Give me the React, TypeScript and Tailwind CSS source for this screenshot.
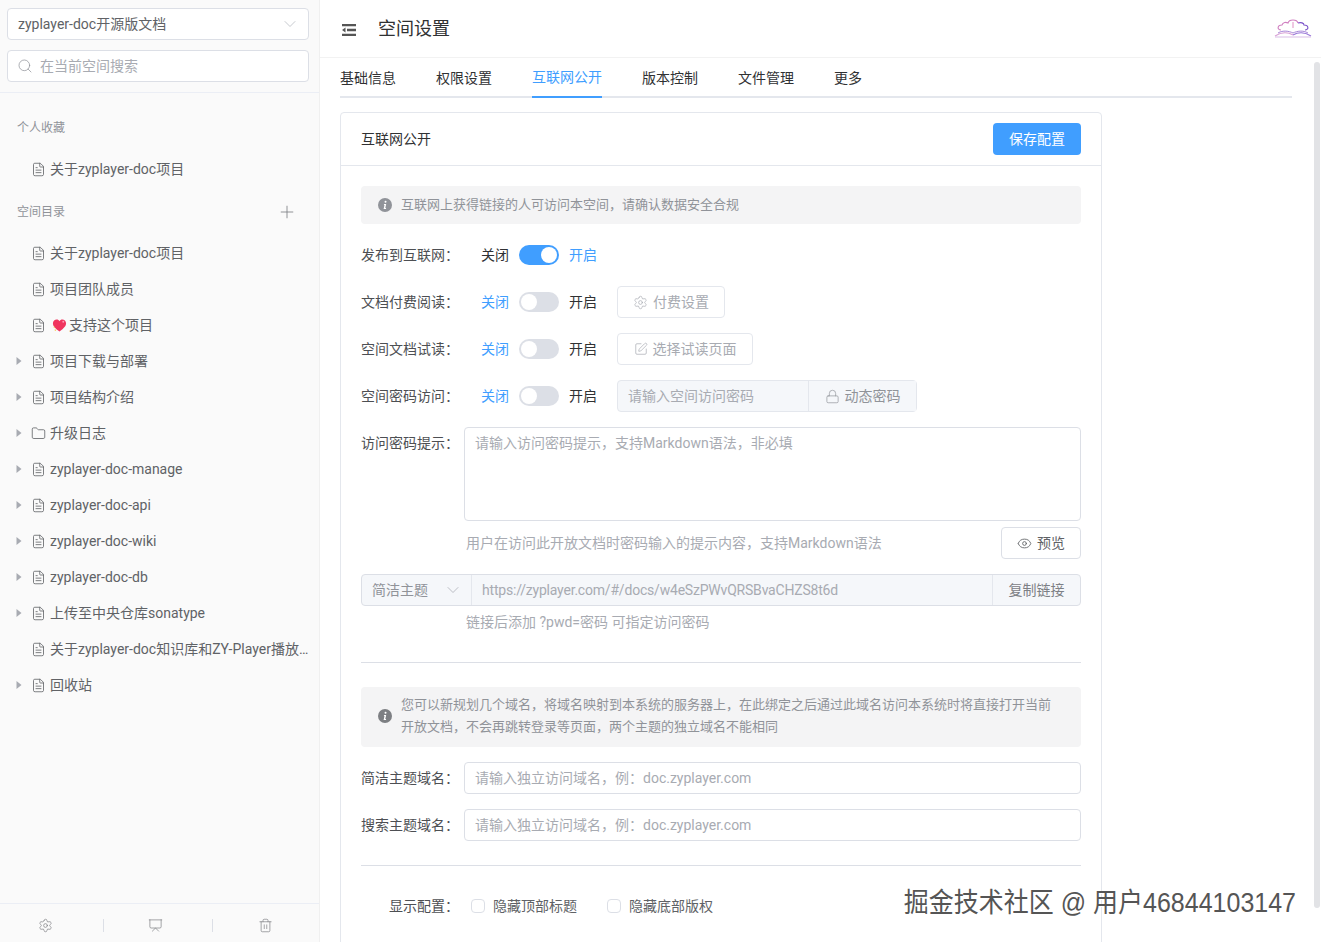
import React from "react";
import { ChevronDown, Search, Plus, FileText, Folder, Settings, Presentation, Trash2, Eye, Lock, SquarePen } from "lucide-react";

function Caret() {
  return (
    <svg width="6" height="8" viewBox="0 0 6 8" className="shrink-0">
      <path d="M0.5 0 L5.5 4 L0.5 8 Z" fill="#a8abb2" />
    </svg>
  );
}

function Heart() {
  return (
    <svg width="15" height="15" viewBox="0 0 16 15" className="shrink-0 ml-[2px] mr-[2px]">
      <path d="M8 14 C3 10 1 8 1 5 C1 2.5 3 1 5 1 C6.3 1 7.4 1.7 8 3 C8.6 1.7 9.7 1 11 1 C13 1 15 2.5 15 5 C15 8 13 10 8 14 Z" fill="#f0355f" />
      <path d="M3 12 l1 1 M2 9 l.8.8" stroke="#f7c948" strokeWidth="1.2" />
      <circle cx="12" cy="3.5" r="1" fill="#ff9ab5" />
    </svg>
  );
}

function TreeRow({ text, caret, icon, heart }: { text: string; caret?: boolean; icon?: "folder"; heart?: boolean }) {
  return (
    <div className="h-9 flex items-center text-sm text-[#606266] whitespace-nowrap">
      <div className="w-[31px] pl-4 shrink-0">{caret && <Caret />}</div>
      {icon === "folder" ? (
        <Folder size={15} strokeWidth={1.3} className="shrink-0 text-[#606266]" />
      ) : (
        <FileText size={15} strokeWidth={1.3} className="shrink-0 text-[#606266]" />
      )}
      <div className="ml-1 flex items-center w-[262px] min-w-0">
        {heart && <Heart />}
        <span className="truncate">{text}</span>
      </div>
    </div>
  );
}

function InfoIcon({ color }: { color: string }) {
  return (
    <svg width="14" height="14" viewBox="0 0 14 14" className="shrink-0">
      <circle cx="7" cy="7" r="7" fill={color} />
      <path d="M7.6 2.8 a1 1 0 1 1 -0.1 2 a1 1 0 0 1 0.1 -2 Z M6.1 6 H8.2 L7.3 10 H8.2 L7.9 11 H5.6 L6.5 7 H5.8 Z" fill="#fff" />
    </svg>
  );
}

function Label({ text }: { text: string }) {
  return <div className="w-[98px] mr-[5px] text-right text-sm text-[#4d4f53] shrink-0 whitespace-nowrap">{text}</div>;
}

function Switch({ on }: { on: boolean }) {
  return (
    <div className={`mx-[10px] w-10 h-5 rounded-full flex items-center px-[2px] ${on ? "bg-[#409eff] justify-end" : "bg-[#dcdfe6] justify-start"}`}>
      <div className="w-4 h-4 rounded-full bg-white" />
    </div>
  );
}

function ToggleRow({ label, on, children }: { label: string; on?: boolean; children?: React.ReactNode }) {
  return (
    <div className="flex items-center h-8 mt-[15px] text-sm">
      <Label text={label} />
      <span className={`ml-[17px] ${on ? "text-[#303133]" : "text-[#409eff]"}`}>关闭</span>
      <Switch on={!!on} />
      <span className={on ? "text-[#409eff]" : "text-[#303133]"}>开启</span>
      {children && <div className="ml-5 flex">{children}</div>}
    </div>
  );
}

function DisabledButton({ icon, text, width }: { icon: React.ReactNode; text: string; width: string }) {
  return (
    <div className={`h-8 ${width} border border-[#e4e7ed] rounded bg-white flex items-center justify-center gap-[5px] text-sm text-[#a8abb2]`}>
      {icon}
      <span>{text}</span>
    </div>
  );
}

function DomainRow({ label, className }: { label: string; className: string }) {
  return (
    <div className={`flex items-center h-8 ${className}`}>
      <Label text={label} />
      <div className="flex-1 h-8 border border-[#dcdfe6] rounded bg-white px-[10px] flex items-center text-sm text-[#a8abb2]">
        请输入独立访问域名，例：doc.zyplayer.com
      </div>
    </div>
  );
}

function Logo() {
  return (
    <svg width="38" height="22" viewBox="0 0 38 22" fill="none">
      <path d="M7 13 C3 13 3 8 8 8 C9 5 12 5 14 6 C15 2 23 2 24 6" stroke="#d07fc0" strokeWidth="1.1" />
      <path d="M24 6 C27 5 30 6 30 8 C35 8 35 13 31 13" stroke="#7a52c9" strokeWidth="1.1" />
      <path d="M19 5 V11" stroke="#e08fc4" strokeWidth="1" />
      <path d="M1 19 C7 15 14 15 19 18" stroke="#d9a3d6" strokeWidth="1.1" />
      <path d="M19 18 C24 15 31 15 37 19" stroke="#9a78d8" strokeWidth="1.1" />
      <path d="M4 16 C9 13 15 14 19 16 C23 14 29 13 34 16" stroke="#a886d8" strokeWidth="1" />
      <path d="M1 20 H37" stroke="#d9bde6" strokeWidth="1" />
    </svg>
  );
}

export default function App() {
  const tabs = ["基础信息", "权限设置", "互联网公开", "版本控制", "文件管理", "更多"];
  return (
    <div className="relative flex h-[942px] w-full overflow-hidden bg-white text-sm font-['Roboto','Noto_Sans_CJK_SC',sans-serif]">
      <aside className="w-[320px] shrink-0 h-full flex flex-col bg-[#fafafa] border-r border-[#f0f0f0]">
        <div className="h-[93px] shrink-0 border-b border-[#ebeef5] pt-2 pl-[7px] pr-[10px]">
          <div className="h-8 bg-white border border-[#dcdfe6] rounded flex items-center justify-between pl-[10px] pr-[8px] text-sm text-[#606266]">
            <span>zyplayer-doc开源版文档</span>
            <ChevronDown size={20} strokeWidth={0.9} className="text-[#b4b8bf]" />
          </div>
          <div className="mt-[10px] h-8 bg-white border border-[#dcdfe6] rounded flex items-center pl-[9px] text-sm text-[#a8abb2]">
            <Search size={16} strokeWidth={1.1} className="text-[#909399] mr-[7px]" />
            <span>在当前空间搜索</span>
          </div>
        </div>
        <div className="flex-1">
          <div className="mt-[17px] h-9 pl-[17px] flex items-center text-xs text-[#909399]">个人收藏</div>
          <div className="mt-[5px]">
            <TreeRow text="关于zyplayer-doc项目" />
          </div>
          <div className="mt-[7px] h-9 pl-[17px] pr-[22px] pb-[1px] flex items-center justify-between text-xs text-[#909399]">
            <span>空间目录</span>
            <Plus size={20} strokeWidth={1} className="text-[#7c7e82]" />
          </div>
          <div className="mt-[5px]">
            <TreeRow text="关于zyplayer-doc项目" />
            <TreeRow text="项目团队成员" />
            <TreeRow text="支持这个项目" heart />
            <TreeRow text="项目下载与部署" caret />
            <TreeRow text="项目结构介绍" caret />
            <TreeRow text="升级日志" caret icon="folder" />
            <TreeRow text="zyplayer-doc-manage" caret />
            <TreeRow text="zyplayer-doc-api" caret />
            <TreeRow text="zyplayer-doc-wiki" caret />
            <TreeRow text="zyplayer-doc-db" caret />
            <TreeRow text="上传至中央仓库sonatype" caret />
            <TreeRow text="关于zyplayer-doc知识库和ZY-Player播放器的关系" />
            <TreeRow text="回收站" caret />
          </div>
        </div>
        <div className="h-[39px] shrink-0 border-t border-[#ebeef5] pt-[4px] flex items-center text-[#7c7e82]">
          <div className="w-[90px] flex justify-center"><Settings size={15} strokeWidth={1.1} /></div>
          <div className="ml-[13px] mr-[6px] w-px h-[13px] bg-[#dcdfe6]" />
          <div className="w-[90px] flex justify-center"><Presentation size={15} strokeWidth={1.1} /></div>
          <div className="ml-[12px] mr-[7px] w-px h-[13px] bg-[#dcdfe6]" />
          <div className="w-[90px] flex justify-center"><Trash2 size={15} strokeWidth={1.1} /></div>
        </div>
      </aside>

      <main className="flex-1 min-w-0 flex flex-col">
        <header className="h-[58px] shrink-0 border-b border-[#f2f2f2] flex items-center pl-[22px] pr-[9px]">
          <svg width="14" height="12" viewBox="0 0 14 12" className="shrink-0 text-[#555] relative top-[1px]">
            <path d="M0 1 H14 M5 6 H14 M0 11 H14" stroke="currentColor" strokeWidth="2.4" />
            <path d="M0 6 L3.5 3.5 V8.5 Z" fill="currentColor" />
          </svg>
          <span className="ml-[22px] text-lg text-[#303133]">空间设置</span>
          <div className="ml-auto relative -top-[1px]"><Logo /></div>
        </header>
        <div className="pl-5 pr-[29px]">
          <div className="h-10 flex gap-10 border-b-2 border-[#e4e7ed]">
            {tabs.map((t) => (
              <div
                key={t}
                className={`h-10 flex items-center text-sm pb-[1px] ${t === "互联网公开" ? "text-[#409eff] border-b-2 border-[#409eff]" : "text-[#303133]"}`}
              >
                {t}
              </div>
            ))}
          </div>
          <section className="mt-[14px] w-[762px] border border-[#e4e7ed] rounded h-[900px]">
            <div className="h-[53px] border-b border-[#e4e7ed] pl-5 pr-5 flex items-center justify-between">
              <span className="text-sm text-[#303133]">互联网公开</span>
              <div className="w-[88px] h-8 bg-[#409eff] rounded text-white text-sm flex items-center justify-center">保存配置</div>
            </div>
            <div className="px-5 pt-5">
              <div className="h-[38px] bg-[#f4f4f5] rounded pl-[17px] flex items-center gap-[9px] text-[13px] text-[#909399]">
                <InfoIcon color="#909399" />
                <span>互联网上获得链接的人可访问本空间，请确认数据安全合规</span>
              </div>
              <ToggleRow label="发布到互联网：" on />
              <ToggleRow label="文档付费阅读：">
                <DisabledButton width="w-[108px]" text="付费设置" icon={<Settings size={15} strokeWidth={1.1} />} />
              </ToggleRow>
              <ToggleRow label="空间文档试读：">
                <DisabledButton width="w-[136px]" text="选择试读页面" icon={<SquarePen size={14} strokeWidth={1.2} />} />
              </ToggleRow>
              <ToggleRow label="空间密码访问：">
                <div className="flex h-8 w-[300px] border border-[#e4e7ed] rounded bg-[#f5f7fa] text-sm text-[#a8abb2]">
                  <div className="w-[190px] px-[10px] flex items-center">请输入空间访问密码</div>
                  <div className="flex-1 border-l border-[#e4e7ed] bg-[#f5f7fa] flex items-center justify-center gap-[5px] text-[#909399]">
                    <Lock size={15} strokeWidth={1.1} />
                    <span>动态密码</span>
                  </div>
                </div>
              </ToggleRow>
              <div className="flex items-start mt-[15px]">
                <div className="pt-[6px]"><Label text="访问密码提示：" /></div>
                <div className="flex-1 h-[94px] border border-[#dcdfe6] rounded bg-white px-[10px] pt-[5px] text-sm text-[#a8abb2]">
                  请输入访问密码提示，支持Markdown语法，非必填
                </div>
              </div>
              <div className="flex items-center justify-between h-8 mt-[6px] pl-[105px]">
                <span className="text-sm text-[#a8abb2]">用户在访问此开放文档时密码输入的提示内容，支持Markdown语法</span>
                <div className="w-20 h-8 border border-[#dcdfe6] rounded bg-white flex items-center justify-center gap-[5px] text-sm text-[#606266]">
                  <Eye size={15} strokeWidth={1.4} />
                  <span>预览</span>
                </div>
              </div>
              <div className="flex h-8 mt-[15px] border border-[#dcdfe6] rounded bg-[#f5f7fa] text-sm">
                <div className="w-[110px] border-r border-[#e4e7ed] pl-[10px] pr-[8px] flex items-center justify-between text-[#909399]">
                  <span>简洁主题</span>
                  <ChevronDown size={20} strokeWidth={0.9} className="text-[#a8abb2]" />
                </div>
                <div className="flex-1 px-[10px] flex items-center tracking-[-0.2px] text-[#a8abb2]">https://zyplayer.com/#/docs/w4eSzPWvQRSBvaCHZS8t6d</div>
                <div className="w-[88px] border-l border-[#e4e7ed] flex items-center justify-center text-[#7d8085]">复制链接</div>
              </div>
              <div className="h-8 mt-0 pl-[105px] flex items-center text-sm text-[#a8abb2]">链接后添加 ?pwd=密码 可指定访问密码</div>
              <div className="mt-6 border-t border-[#dcdfe6]" />
              <div className="mt-6 h-[60px] bg-[#f4f4f5] rounded pl-[17px] pr-[28px] pb-[2px] flex items-center gap-[9px] text-[13px] leading-[22px] text-[#909399]">
                <InfoIcon color="#7d7f83" />
                <span>您可以新规划几个域名，将域名映射到本系统的服务器上，在此绑定之后通过此域名访问本系统时将直接打开当前开放文档，不会再跳转登录等页面，两个主题的独立域名不能相同</span>
              </div>
              <DomainRow label="简洁主题域名：" className="mt-[15px]" />
              <DomainRow label="搜索主题域名：" className="mt-[15px]" />
              <div className="mt-6 border-t border-[#dcdfe6]" />
              <div className="flex items-center h-8 mt-6">
                <Label text="显示配置：" />
                <div className="ml-[7px] w-[14px] h-[14px] border border-[#dcdfe6] rounded-sm bg-white" />
                <span className="ml-2 text-sm text-[#606266]">隐藏顶部标题</span>
                <div className="ml-[30px] w-[14px] h-[14px] border border-[#dcdfe6] rounded-sm bg-white" />
                <span className="ml-2 text-sm text-[#606266]">隐藏底部版权</span>
              </div>
            </div>
          </section>
        </div>
      </main>

      <div className="absolute right-[1px] top-[62px] w-[6px] h-[846px] rounded-full bg-[#e2e3e6]" />
      <div className="absolute right-[25px] top-[885px] scale-y-110 text-[25px] leading-[34px] whitespace-nowrap text-[#555555] font-['Liberation_Sans','Noto_Sans_CJK_SC',sans-serif] [text-shadow:1px_1px_0_#fff,-1px_0_0_#fff]">
        掘金技术社区 @ 用户46844103147
      </div>
    </div>
  );
}
